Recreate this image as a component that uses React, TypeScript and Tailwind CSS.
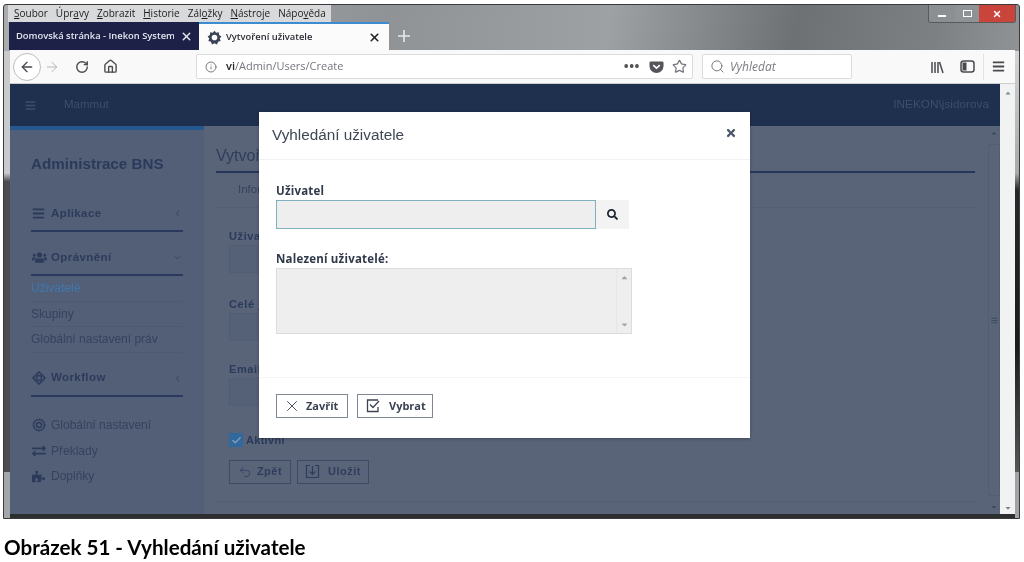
import { ArrowLeft, ArrowRight, RotateCw, Home, Info, Star, Search, X, Undo2, Check } from "lucide-react";
import { FaBars, FaUsers, FaSearch, FaTimes, FaExchangeAlt, FaPuzzlePiece, FaChevronLeft, FaChevronDown, FaCaretUp, FaCaretDown } from "react-icons/fa";

const menus: [string, string, string][] = [
  ["", "S", "oubor"],
  ["Úpr", "a", "vy"],
  ["", "Z", "obrazit"],
  ["", "H", "istorie"],
  ["Zál", "o", "žky"],
  ["", "N", "ástroje"],
  ["Nápo", "v", "ěda"],
];

function MenuBar() {
  return (
    <div className="-ml-[2px] flex h-[17px] w-[323px] items-center gap-[8px] bg-[#d8d9da] pl-[6px] font-['Open_Sans',sans-serif] text-[10px] text-[#1c1c1c]">
      {menus.map(([a, b, c]) => (
        <span key={a + b + c}>
          {a}
          <u>{b}</u>
          {c}
        </span>
      ))}
    </div>
  );
}

function Tabs() {
  return (
    <div className="-ml-[1px] flex h-[28px] items-stretch font-['Open_Sans',sans-serif] text-[9.4px]">
      <div className="flex w-[190px] items-center justify-between bg-[#1d2147] pl-[7px] pr-[6px] font-semibold text-[#e4e6ee]">
        <span className="w-[158px] overflow-hidden whitespace-nowrap">Domovská stránka - Inekon Systems</span>
        <X size={13} strokeWidth={2.5} className="text-[#e8e8ee]" />
      </div>
      <div className="flex w-[190px] items-center border-t-2 border-[#3d8bd0] bg-[#fbfbfb] pl-[8px] pr-[8px] font-semibold text-[#2b2b35]">
        <svg width="15" height="15" viewBox="0 0 24 24" className="mr-[4px] text-[#3a4256]" fill="currentColor">
          <path d="M12 1l2.6 3.4 4.2-.9.6 4.3 3.6 2.4L20.4 13.500l1.4 4-4.1 1.4L16 23l-4-1.7L8 23l-1.7-4.1-4.1-1.4 1.4-4L1 10.2l3.6-2.4.6-4.3 4.2.9z" />
          <circle cx="12" cy="12" r="4.500" fill="#fbfbfb" />
        </svg>
        <span className="flex-1">Vytvoření uživatele</span>
        <X size={13} strokeWidth={3} className="text-[#222]" />
      </div>
      <div className="flex w-[30px] items-center justify-center text-[#e8e8e8]">
        <svg width="14" height="14" viewBox="0 0 14 14" stroke="currentColor" strokeWidth="1.600">
          <path d="M7 1v12M1 7h12" />
        </svg>
      </div>
    </div>
  );
}

function Toolbar() {
  return (
    <div className="flex h-[34px] items-center border-b border-[#cfcfcf] bg-[#f9f9fa] text-[#4a4a4f]">
      <div className="ml-[3px] flex h-[28px] w-[28px] items-center justify-center rounded-full border border-[#bdbdbd] bg-white">
        <ArrowLeft size={16} strokeWidth={2} />
      </div>
      <ArrowRight size={16} strokeWidth={1.500} className="ml-[3px] text-[#b5b5b8]" />
      <RotateCw size={14} strokeWidth={2.400} className="ml-[15px]" />
      <Home size={15} strokeWidth={2.200} className="ml-[14px]" />
      <div className="ml-[78px] flex h-[25px] w-[497px] items-center rounded-[2px] border border-[#dcdcdc] bg-white pl-[8px] pr-[5px] font-['Open_Sans',sans-serif] text-[11px] text-[#767680]">
        <Info size={12} strokeWidth={1.600} className="text-[#5a5a60]" />
        <span className="ml-[9px] flex-1">
          <span className="font-semibold text-[#222]">vi</span>/Admin/Users/Create
        </span>
        <span className="mr-[9px] text-[13px] font-bold leading-none tracking-[0.5px] text-[#555]">•••</span>
        <svg width="15" height="14" viewBox="0 0 16 14" className="mr-[8px]">
          <path d="M2 1h12a1.500 1.500 0 0 1 1.500 1.500V6A7.500 7.500 0 0 1 .5 6V2.500A1.500 1.500 0 0 1 2 1z" fill="#55555b" />
          <path d="M4.500 5L8 8.200 11.500 5" fill="none" stroke="#fff" strokeWidth="1.800" />
        </svg>
        <Star size={15} strokeWidth={2} />
      </div>
      <div className="ml-[9px] flex h-[25px] w-[150px] items-center rounded-[2px] border border-[#dcdcdc] bg-white pl-[7px] font-['Open_Sans',sans-serif] text-[12px] italic text-[#7b7b82]">
        <Search size={15} strokeWidth={1.600} className="text-[#77777c]" />
        <span className="ml-[5px]">Vyhledat</span>
      </div>
      <svg width="14" height="14" viewBox="0 0 14 14" className="ml-[78px]" stroke="#4a4a4f" strokeWidth="1.500" fill="none">
        <path d="M2 2v11M5 2v11M8 2v11M9.500 2l3.500 11" />
      </svg>
      <svg width="15" height="13" viewBox="0 0 15 13" className="ml-[16px]" fill="none" stroke="#4a4a4f" strokeWidth="1.500">
        <rect x="1" y="1" width="13" height="11" rx="2.500" />
        <rect x="2.500" y="2.500" width="4" height="8" fill="#4a4a4f" stroke="none" />
      </svg>
      <div className="ml-[8px] h-[26px] w-px bg-[#e2e2e2]" />
      <FaBars size={13} className="ml-[8px] text-[#4a4a4f]" />
    </div>
  );
}

function GroupHead({ icon, label, chevron }: { icon: React.ReactNode; label: string; chevron: React.ReactNode }) {
  return (
    <div className="flex h-[28px] items-center border-b-2 border-[#2b3a5c] pb-[7px] text-[#2d3b5b]">
      <span className="flex w-[20px] justify-start pl-[1px]">{icon}</span>
      <span className="flex-1 text-[11.5px] font-bold tracking-[0.4px]">{label}</span>
      <span className="pr-[2px] text-[#414e69]">{chevron}</span>
    </div>
  );
}

function SubLink({ label, active }: { label: string; active?: boolean }) {
  return (
    <div className={`flex h-[25.5px] items-center border-b border-[#4e5a72] text-[12px] ${active ? "text-[#3f78b0]" : "text-[#36425e]"}`}>
      {label}
    </div>
  );
}

function PlainLink({ icon, label }: { icon: React.ReactNode; label: string }) {
  return (
    <div className="flex h-[25.5px] items-center text-[12px] text-[#36425e]">
      <span className="flex w-[20px] justify-start pl-[1px] text-[#2d3b5b]">{icon}</span>
      {label}
    </div>
  );
}

function Sidebar() {
  return (
    <div className="flex w-[194px] shrink-0 flex-col bg-[#535f77] px-[21px]">
      <div className="-mx-[21px] h-[4px] bg-[#25588f]" />
      <div className="mt-[25px] text-[15.2px] font-bold leading-[18px] text-[#2b3a5b]">Administrace BNS</div>
      <div className="mt-[31px]">
        <GroupHead icon={<FaBars size={13} />} label="Aplikace" chevron={<FaChevronLeft size={7} />} />
      </div>
      <div className="mt-[16px]">
        <GroupHead icon={<FaUsers size={15} />} label="Oprávnění" chevron={<FaChevronDown size={7} />} />
      </div>
      <SubLink label="Uživatelé" active />
      <SubLink label="Skupiny" />
      <SubLink label="Globální nastavení práv" />
      <div className="mt-[16px]">
        <GroupHead
          icon={
            <svg width="14" height="14" viewBox="0 0 14 14" fill="none" stroke="currentColor" strokeWidth="1.600">
              <path d="M7 1l6 6-6 6-6-6z" />
              <circle cx="7" cy="7" r="2.500" strokeWidth="1.300" />
            </svg>
          }
          label="Workflow"
          chevron={<FaChevronLeft size={7} />}
        />
      </div>
      <div className="mt-[16px]">
        <PlainLink
          icon={
            <svg width="14" height="14" viewBox="0 0 14 14" fill="none" stroke="currentColor">
              <circle cx="7" cy="7" r="5.500" strokeWidth="1.800" strokeDasharray="2 0.500" />
              <circle cx="7" cy="7" r="2.500" strokeWidth="1.500" />
            </svg>
          }
          label="Globální nastavení"
        />
        <PlainLink icon={<FaExchangeAlt size={14} />} label="Překlady" />
        <PlainLink icon={<FaPuzzlePiece size={13} />} label="Doplňky" />
      </div>
    </div>
  );
}

function DimField({ label, height }: { label: string; height: string }) {
  return (
    <div className={height}>
      <div className="h-[14px] text-[11px] font-bold leading-[14px] tracking-[0.6px] text-[#2b3a5b]">{label}</div>
      <div className="mt-[2px] h-[28px] w-[200px] border border-[#515d75] bg-[#556177]" />
    </div>
  );
}

function DimButton({ icon, label, width }: { icon: React.ReactNode; label: string; width: string }) {
  return (
    <div className={`flex h-[24px] items-center justify-center gap-[5px] border border-[#3e4b67] text-[11px] font-bold tracking-[0.5px] text-[#2f3d5d] ${width}`}>
      {icon}
      {label}
    </div>
  );
}

function Main() {
  return (
    <div className="flex min-w-0 flex-1 flex-col pl-[12px] pr-[13px]">
      <div className="mt-[21px] flex h-[26px] items-center border-b-2 border-[#26355a] pb-[6px] text-[16px] text-[#303d5a]">Vytvoření uživatele</div>
      <div className="flex h-[35px] items-center border-b border-[#525e75] pl-[22px] text-[11.5px] text-[#36425e]">Informace</div>
      <div className="flex flex-1 flex-col border-b border-[#525e75] pl-[13px] pt-[21px]">
        <DimField label="Uživatel" height="h-[68px]" />
        <DimField label="Celé jméno" height="h-[65px]" />
        <DimField label="Email" height="h-[68px]" />
        <div className="mt-[2px] flex items-center gap-[3px]">
          <div className="flex h-[14px] w-[14px] items-center justify-center bg-[#31689d] text-[#7f9dbb]">
            <Check size={11} strokeWidth={3} />
          </div>
          <span className="text-[11px] font-bold tracking-[0.3px] text-[#2b3a5b]">Aktivní</span>
        </div>
        <div className="mt-[11px] flex gap-[6px]">
          <DimButton icon={<Undo2 size={14} strokeWidth={1.400} />} label="Zpět" width="w-[62px]" />
          <DimButton
            icon={
              <svg width="15" height="15" viewBox="0 0 15 15" fill="none" stroke="currentColor" strokeWidth="1.200">
                <path d="M5 1.500H1.500v12h12v-12H10M7.500 2v8M4.800 7.500l2.700 2.800 2.700-2.800" />
              </svg>
            }
            label="Uložit"
            width="w-[72px] gap-[8px]"
          />
        </div>
      </div>
      <div className="h-[12px]" />
    </div>
  );
}

function InnerScrollbar() {
  return (
    <div className="flex w-[12px] shrink-0 flex-col items-center justify-between py-[3px] text-[#3d4963]">
      <FaCaretUp size={8} />
      <div className="flex h-[352px] w-full items-center justify-center border border-[#525e75]">
        <FaBars size={7} />
      </div>
      <FaCaretDown size={8} />
    </div>
  );
}

function Modal() {
  return (
    <div className="absolute left-[259px] top-[112px] z-10 flex h-[326px] w-[491px] flex-col bg-white font-['Liberation_Sans',sans-serif] shadow-[0_1px_3px_rgba(0,0,0,0.25)]">
      <div className="flex h-[48px] items-center justify-between border-b border-[#f2f2f2] pl-[13px] pr-[13px]">
        <span className="text-[15.3px] text-[#3e4854]">Vyhledání uživatele</span>
        <FaTimes size={12} className="mb-[6px] text-[#4c576c]" />
      </div>
      <div className="flex flex-1 flex-col pl-[17px] pt-[23px]">
        <div className="font-['Open_Sans',sans-serif] text-[11.5px] font-bold leading-[16px] tracking-[0.2px] text-[#30394a]">Uživatel</div>
        <div className="mt-[1px] flex h-[29px]">
          <div className="w-[320px] border border-[#7fb0bd] bg-[#eeeeee]" />
          <div className="flex w-[33px] items-center justify-center bg-[#f3f3f3] text-[#1c2230]">
            <FaSearch size={11} />
          </div>
        </div>
        <div className="mt-[22px] font-['Open_Sans',sans-serif] text-[11.5px] font-bold leading-[16px] tracking-[0.2px] text-[#30394a]">Nalezení uživatelé:</div>
        <div className="mt-[1px] flex h-[66px] w-[356px] justify-end border border-[#dcdcdc] bg-[#eeeeee]">
          <div className="flex w-[15px] flex-col items-center justify-between border-l border-[#e6e6e6] py-[4px] text-[#a3a3a3]">
            <FaCaretUp size={9} />
            <FaCaretDown size={9} />
          </div>
        </div>
      </div>
      <div className="flex h-[61px] items-start gap-[9px] border-t border-[#f5f5f5] pl-[17px] pt-[16px] font-['Open_Sans',sans-serif] text-[11px] font-bold text-[#3b4352]">
        <div className="flex h-[24px] w-[72px] items-center gap-[5px] border border-[#7f8794] pl-[6px]">
          <X size={18} strokeWidth={1.200} />
          Zavřít
        </div>
        <div className="flex h-[24px] w-[76px] items-center gap-[8px] border border-[#7f8794] pl-[8px]">
          <svg width="15" height="14" viewBox="0 0 15 14" fill="none" stroke="currentColor" strokeWidth="1.300">
            <path d="M12 1H1.500v11.500H12V8" />
            <path d="M4 5.500l3 3 6-6.500" />
          </svg>
          Vybrat
        </div>
      </div>
    </div>
  );
}

export default function App() {
  return (
    <div className="relative flex h-[562px] w-[1024px] flex-col overflow-hidden bg-white font-['Liberation_Sans',sans-serif] blur-[0.35px]">
      <div className="relative ml-[3px] mt-[4px] flex h-[515px] w-[1017px] flex-col rounded-t-[3px] border border-[#3a3a3a] bg-[linear-gradient(100deg,#a9adb0_0%,#8f9396_35%,#9da1a3_55%,#6d7173_72%,#7d8183_85%,#a2a5a7_100%)]">
        <div className="absolute inset-y-[46px] left-0 w-[6px] bg-[linear-gradient(180deg,#c9cacb_0%,#c9cacb_29%,#4b4d50_31%,#4b4d50_100%)]" />
        <div className="absolute inset-y-[46px] right-0 w-[4px] bg-[linear-gradient(180deg,#d2d3d4_0%,#a8a9aa_29%,#26272a_33%,#1a1b1d_70%,#55575a_100%)]" />
        <div className="relative flex h-full flex-col pl-[6px] pr-[4px]">
          <div className="absolute right-[3px] top-0 flex h-[18px] w-[88px] overflow-hidden rounded-b-[3px] border border-t-0 border-[#5a5a5a] text-white">
            <div className="flex w-[26px] items-center justify-center bg-[#8b8f92]">
              <div className="mt-[4px] h-[2px] w-[8px] bg-white" />
            </div>
            <div className="flex w-[24px] items-center justify-center bg-[#8f9396]">
              <div className="h-[7px] w-[9px] border border-white" />
            </div>
            <div className="flex flex-1 items-center justify-center bg-[#c9453c]">
              <X size={10} strokeWidth={3.500} />
            </div>
          </div>
          <MenuBar />
          <Tabs />
          <Toolbar />
          <div className="flex min-h-0 flex-1">
            <div className="flex min-w-0 flex-1 flex-col">
              <div className="flex h-[42px] items-center justify-between bg-[#1f2f4e] pl-[15px] pr-[11px] text-[11.5px] text-[#3f4d6b]">
                <div className="flex items-center gap-[28px]">
                  <FaBars size={11} />
                  <span>Mammut</span>
                </div>
                <span className="text-[11.8px]">INEKON\jsidorova</span>
              </div>
              <div className="flex min-h-0 flex-1 bg-[#596479]">
                <Sidebar />
                <Main />
                <InnerScrollbar />
              </div>
            </div>
            <div className="flex w-[15px] shrink-0 flex-col items-center justify-between bg-[#f1f2f2] pb-[2px] pt-[5px] text-[#7d8590]">
              <FaCaretUp size={8} />
              <FaCaretDown size={8} />
            </div>
          </div>
          <div className="h-[4px] bg-[#2c2e30]" />
        </div>
      </div>
      <div className="pl-[4px] pt-[16px] font-['Lato',sans-serif] text-[20.6px] font-bold leading-[24px] text-black">Obrázek 51 - Vyhledání uživatele</div>
      <Modal />
    </div>
  );
}
